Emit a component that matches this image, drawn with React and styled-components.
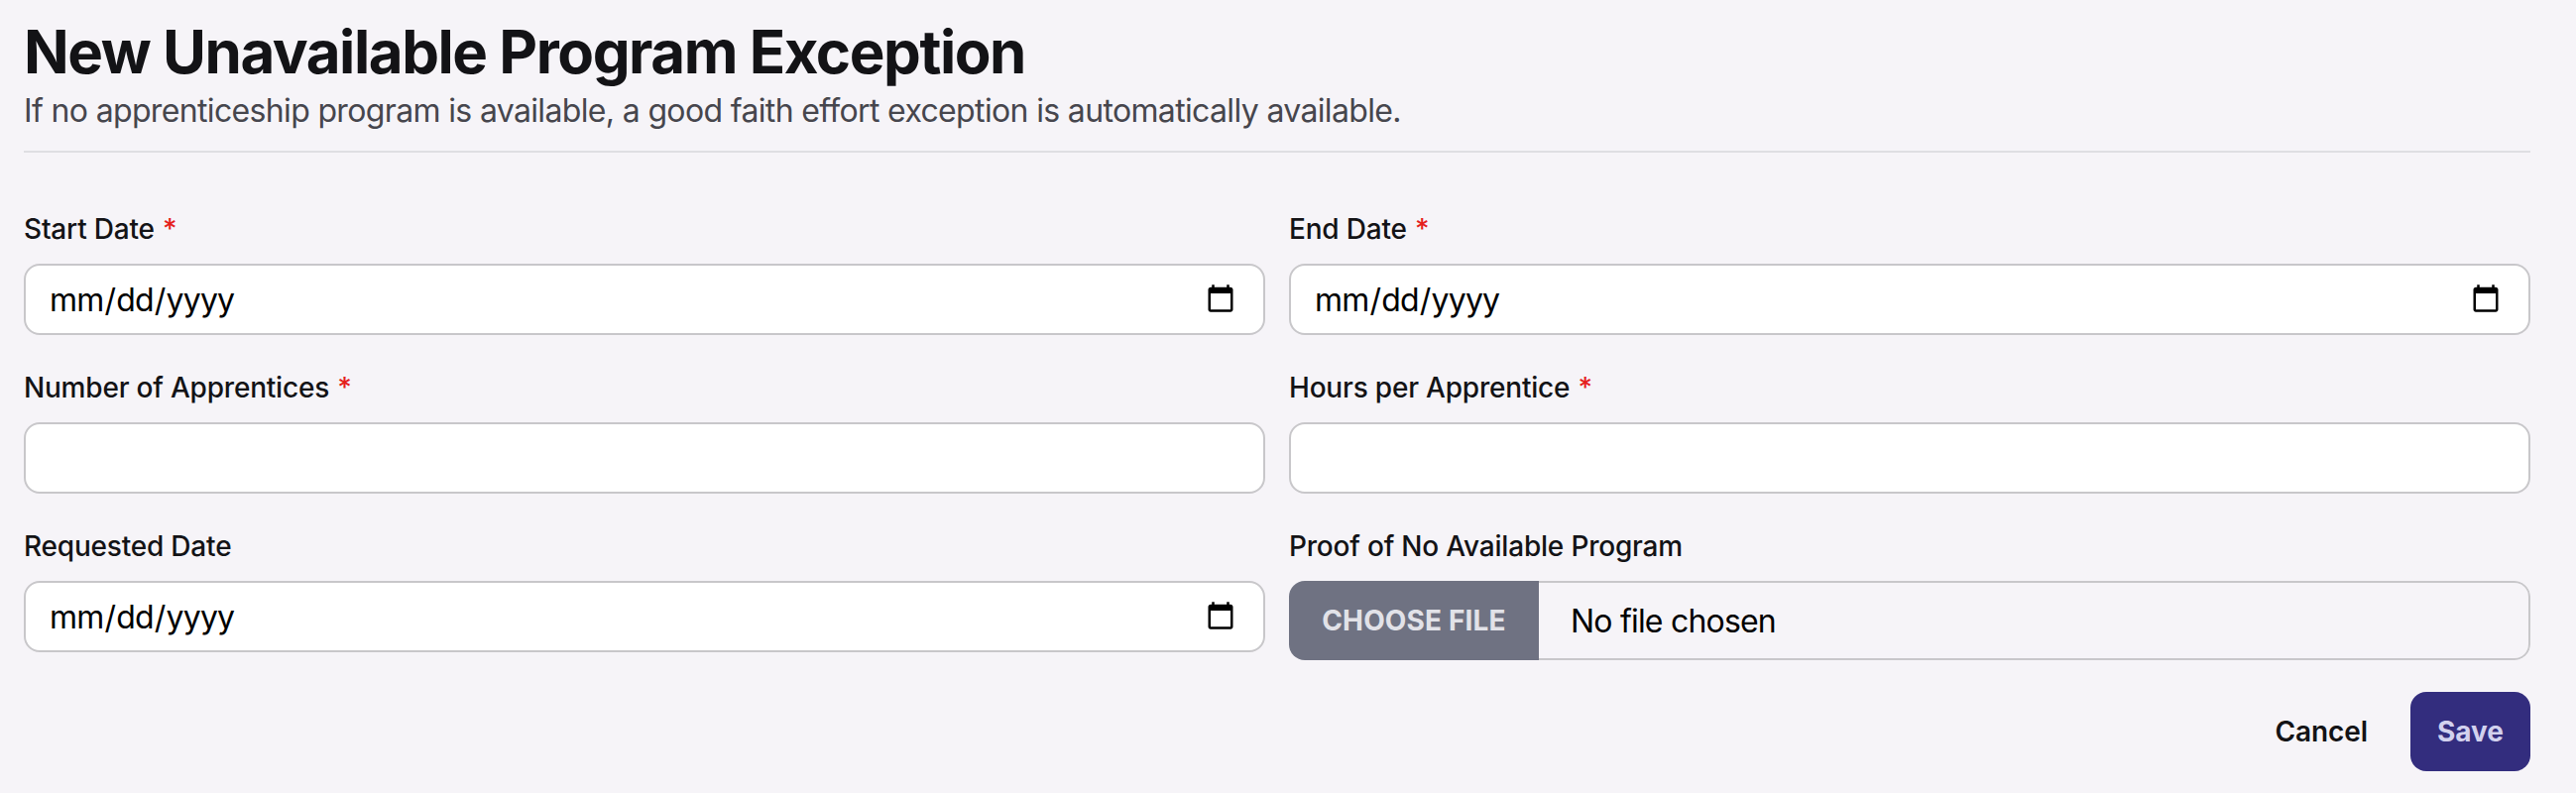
import styled, { createGlobalStyle } from 'styled-components'

const Global = createGlobalStyle`
  body {
    margin: 0;
    background: #f6f4f8;
    font-family: Inter, "Noto Sans", sans-serif;
    color: #131316;
  }
`

const Page = styled.div`
  padding: 16px 46px 22px 24px;
`

const Header = styled.header`
  padding-bottom: 16px;
  border-bottom: 2px solid #dfdee2;
  margin-bottom: 56px;
`

const Title = styled.h1`
  margin: 0;
  font-size: 60px;
  line-height: 72px;
  font-weight: 700;
  letter-spacing: -1.45px;
`

const Subtitle = styled.p`
  margin: 0;
  font-size: 32px;
  line-height: 48px;
  font-weight: 400;
  letter-spacing: -0.65px;
  color: #46464d;
`

const Grid = styled.div`
  display: grid;
  grid-template-columns: 1fr 1fr;
  column-gap: 24px;
  row-gap: 32px;
`

const Field = styled.div`
  display: flex;
  flex-direction: column;
  gap: 15px;
`

const Label = styled.label`
  padding-top: 1px;
  font-size: 28px;
  line-height: 40px;
  font-weight: 500;
  letter-spacing: -0.2px;
`

const Required = styled.span`
  color: #e5201c;
  margin-left: 1px;
`

const Input = styled.input`
  box-sizing: border-box;
  width: 100%;
  height: 72px;
  padding: 0 27px 0 23px;
  border: 2px solid #c8c7ca;
  border-radius: 16px;
  background: #fff;
  font-family: inherit;
  font-size: 32px;
  letter-spacing: -0.8px;
  color: #000;
  outline: none;

  &::-webkit-calendar-picker-indicator {
    width: 32px;
    height: 32px;
    padding: 0;
    margin: 0;
  }
`

const FileBox = styled.label`
  display: flex;
  height: 80px;
  border-radius: 16px;
  overflow: hidden;
`

const FileButton = styled.span`
  flex: 0 0 252px;
  display: flex;
  align-items: center;
  justify-content: center;
  background: #6f7282;
  color: #e2e2e8;
  font-size: 28px;
  font-weight: 650;
  letter-spacing: 0.15px;
  text-transform: uppercase;
`

const FileName = styled.span`
  flex: 1;
  display: flex;
  align-items: center;
  padding-left: 32px;
  border: 2px solid #c8c7ca;
  border-left: 0;
  border-radius: 0 16px 16px 0;
  font-size: 32px;
  letter-spacing: -0.8px;
  color: #000;
`

const HiddenFile = styled.input`
  display: none;
`

const Actions = styled.div`
  display: flex;
  justify-content: flex-end;
  align-items: center;
  gap: 43px;
  margin-top: 32px;
`

const CancelButton = styled.button`
  border: 0;
  padding: 0;
  background: none;
  font-family: inherit;
  font-size: 28px;
  font-weight: 600;
  letter-spacing: -0.1px;
  color: #131316;
`

const SaveButton = styled.button`
  width: 121px;
  height: 80px;
  border: 0;
  border-radius: 16px;
  background: #332d7e;
  color: #d2d1ee;
  font-family: inherit;
  font-size: 28px;
  font-weight: 650;
`

const fields = [
  { id: 'start', label: 'Start Date', type: 'date', required: true },
  { id: 'end', label: 'End Date', type: 'date', required: true },
  { id: 'count', label: 'Number of Apprentices', type: 'text', required: true },
  { id: 'hours', label: 'Hours per Apprentice', type: 'text', required: true },
  { id: 'requested', label: 'Requested Date', type: 'date' },
]

export default function App() {
  return (
    <Page>
      <Global />
      <Header>
        <Title>New Unavailable Program Exception</Title>
        <Subtitle>If no apprenticeship program is available, a good faith effort exception is automatically available.</Subtitle>
      </Header>
      <form>
        <Grid>
          {fields.map(f => (
            <Field key={f.id}>
              <Label htmlFor={f.id}>
                {f.label} {f.required && <Required>*</Required>}
              </Label>
              <Input id={f.id} type={f.type} />
            </Field>
          ))}
          <Field>
            <Label htmlFor='proof'>Proof of No Available Program</Label>
            <FileBox>
              <FileButton>Choose File</FileButton>
              <FileName>No file chosen</FileName>
              <HiddenFile id='proof' type='file' />
            </FileBox>
          </Field>
        </Grid>
        <Actions>
          <CancelButton type='button'>Cancel</CancelButton>
          <SaveButton type='submit'>Save</SaveButton>
        </Actions>
      </form>
    </Page>
  )
}
